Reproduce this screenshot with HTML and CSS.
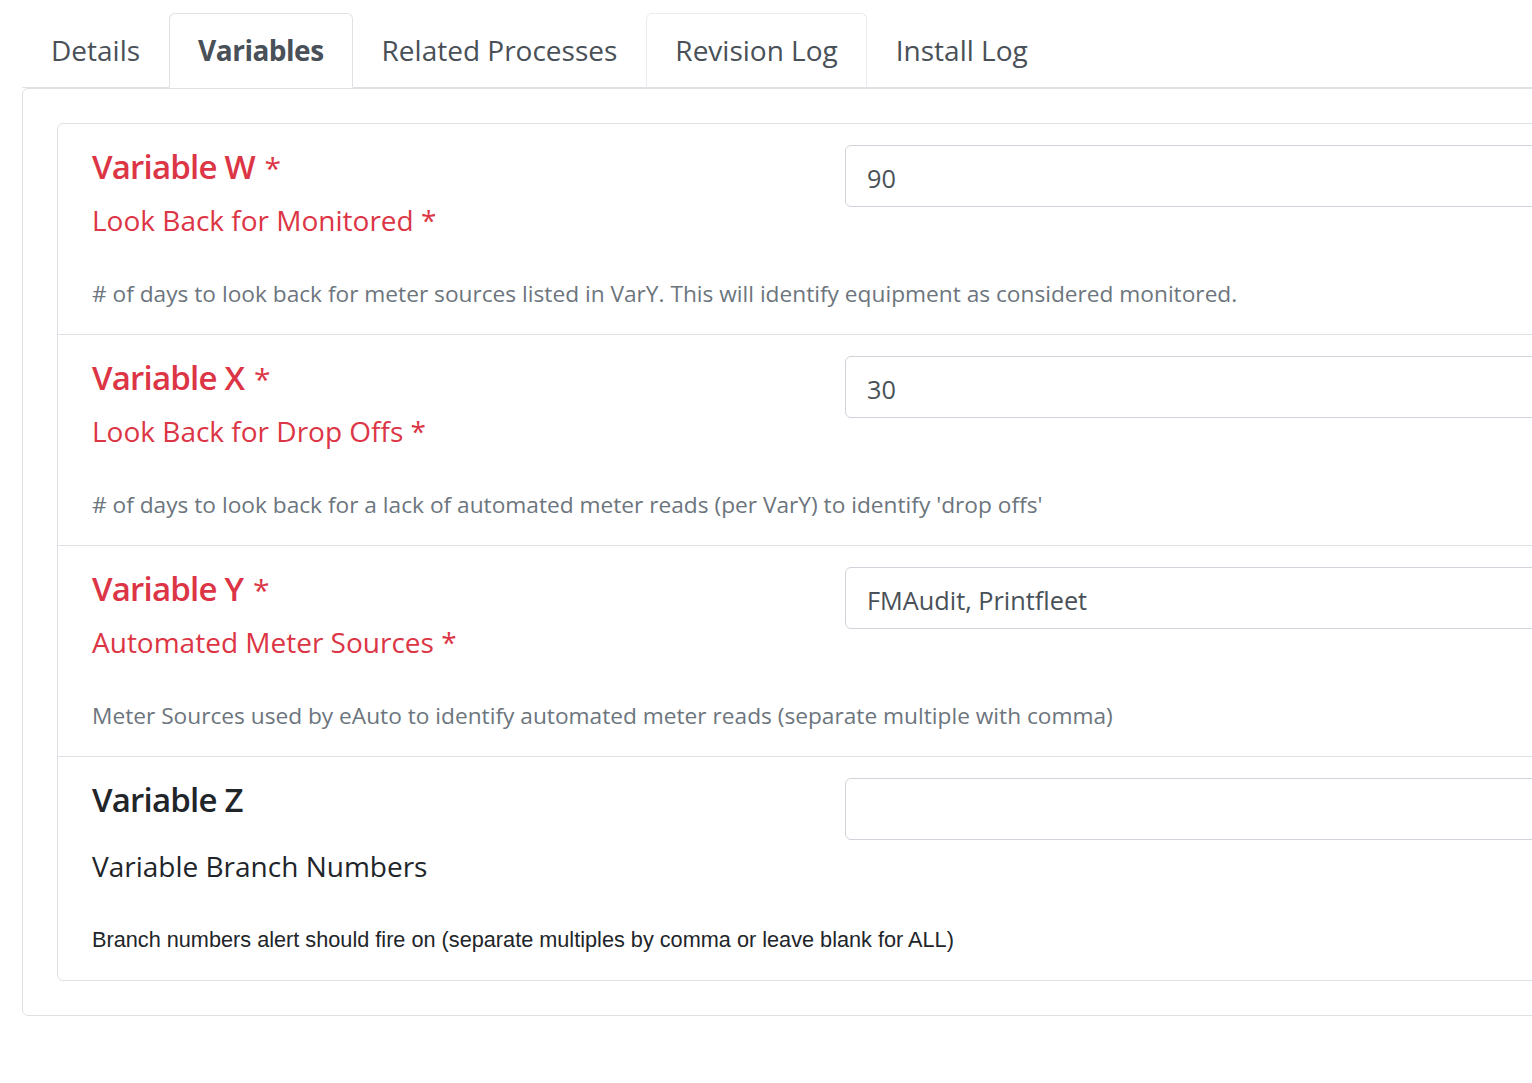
FILE: index.html
```html
<!DOCTYPE html>
<html lang="en">
<head>
<meta charset="utf-8">
<title>Variables</title>
<link rel="stylesheet" href="styles.css">
</head>
<body>
<div class="page">
  <ul class="nav-tabs">
    <li class="tab">Details</li>
    <li class="tab active">Variables</li>
    <li class="tab">Related Processes</li>
    <li class="tab hover">Revision Log</li>
    <li class="tab">Install Log</li>
  </ul>
  <div class="tab-content">
    <div class="card">
      <div class="var-row">
        <div class="var-top">
          <div class="labels">
            <div class="var-name req">Variable W <span class="star">*</span></div>
            <div class="var-title req">Look Back for Monitored *</div>
          </div>
          <div class="input">90</div>
        </div>
        <p class="desc">&#35; of days to look back for meter sources listed in VarY. This will identify equipment as considered monitored.</p>
      </div>
      <div class="var-row">
        <div class="var-top">
          <div class="labels">
            <div class="var-name req">Variable X <span class="star">*</span></div>
            <div class="var-title req">Look Back for Drop Offs *</div>
          </div>
          <div class="input">30</div>
        </div>
        <p class="desc">&#35; of days to look back for a lack of automated meter reads (per VarY) to identify 'drop offs'</p>
      </div>
      <div class="var-row">
        <div class="var-top">
          <div class="labels">
            <div class="var-name req">Variable Y <span class="star">*</span></div>
            <div class="var-title req">Automated Meter Sources *</div>
          </div>
          <div class="input">FMAudit, Printfleet</div>
        </div>
        <p class="desc">Meter Sources used by eAuto to identify automated meter reads (separate multiple with comma)</p>
      </div>
      <div class="var-row">
        <div class="var-top">
          <div class="labels">
            <div class="var-name">Variable Z</div>
            <div class="var-title plain">Variable Branch Numbers</div>
          </div>
          <div class="input"></div>
        </div>
        <p class="desc plain-desc">Branch numbers alert should fire on (separate multiples by comma or leave blank for ALL)</p>
      </div>
    </div>
  </div>
</div>
</body>
</html>
```
FILE: styles.css
```css
html, body {
  margin: 0;
  padding: 0;
  background: #fff;
  overflow: hidden;
}
body {
  font-family: "Open Sans", "Noto Sans", sans-serif;
  color: #212529;
}
.page {
  width: 1700px;
  padding: 13px 0 0 22px;
}
.nav-tabs {
  display: flex;
  list-style: none;
  margin: 0;
  padding: 0;
  border-bottom: 1px solid #dee2e6;
}
.tab {
  font-size: 28px;
  line-height: 45px;
  padding: 14px 28px;
  border: 1px solid transparent;
  border-top-left-radius: 6px;
  border-top-right-radius: 6px;
  margin-bottom: -1px;
  color: #495057;
}
.tab.active {
  font-weight: 700;
  letter-spacing: -0.5px;
  border-color: #dee2e6 #dee2e6 #fff;
  background: #fff;
}
.tab.hover {
  border-color: #e9ecef #e9ecef #dee2e6;
}
.tab-content {
  border: 1px solid #dee2e6;
  border-radius: 6px;
  padding: 34px;
}
.card {
  border: 1px solid #dee2e6;
  border-radius: 6px;
}
.var-row {
  padding: 21px 34px 24px;
  border-bottom: 1px solid #dee2e6;
}
.var-row:last-child {
  border-bottom: 0;
}
.var-top {
  display: grid;
  grid-template-columns: 753px 1fr;
}
.var-name {
  height: 43px;
  font-size: 33px;
  line-height: 43px;
  font-weight: 600;
  letter-spacing: -0.8px;
}
.star {
  font-weight: 400;
  letter-spacing: 0;
  font-size: 30px;
  line-height: 0;
  margin-left: 2px;
}
.var-title {
  height: 40px;
  font-size: 28px;
  line-height: 40px;
  margin-top: 12px;
}
.var-title.plain {
  margin-top: 25px;
}
.req {
  color: #dc3545;
}
.input {
  height: 62px;
  box-sizing: border-box;
  border: 1px solid #ced4da;
  border-radius: 6px;
  padding: 2px 21px 0;
  font-size: 25.3px;
  line-height: 60px;
  color: #495057;
}
.desc {
  height: 34px;
  margin: 36px 0 0;
  padding-top: 1px;
  box-sizing: border-box;
  font-size: 22.7px;
  line-height: 34px;
  color: #6c757d;
}
.desc.plain-desc {
  font-family: "Liberation Sans", Arial, sans-serif;
  font-size: 21.7px;
  color: #212529;
}
.var-row:last-child .desc {
  margin-top: 36px;
}
```
